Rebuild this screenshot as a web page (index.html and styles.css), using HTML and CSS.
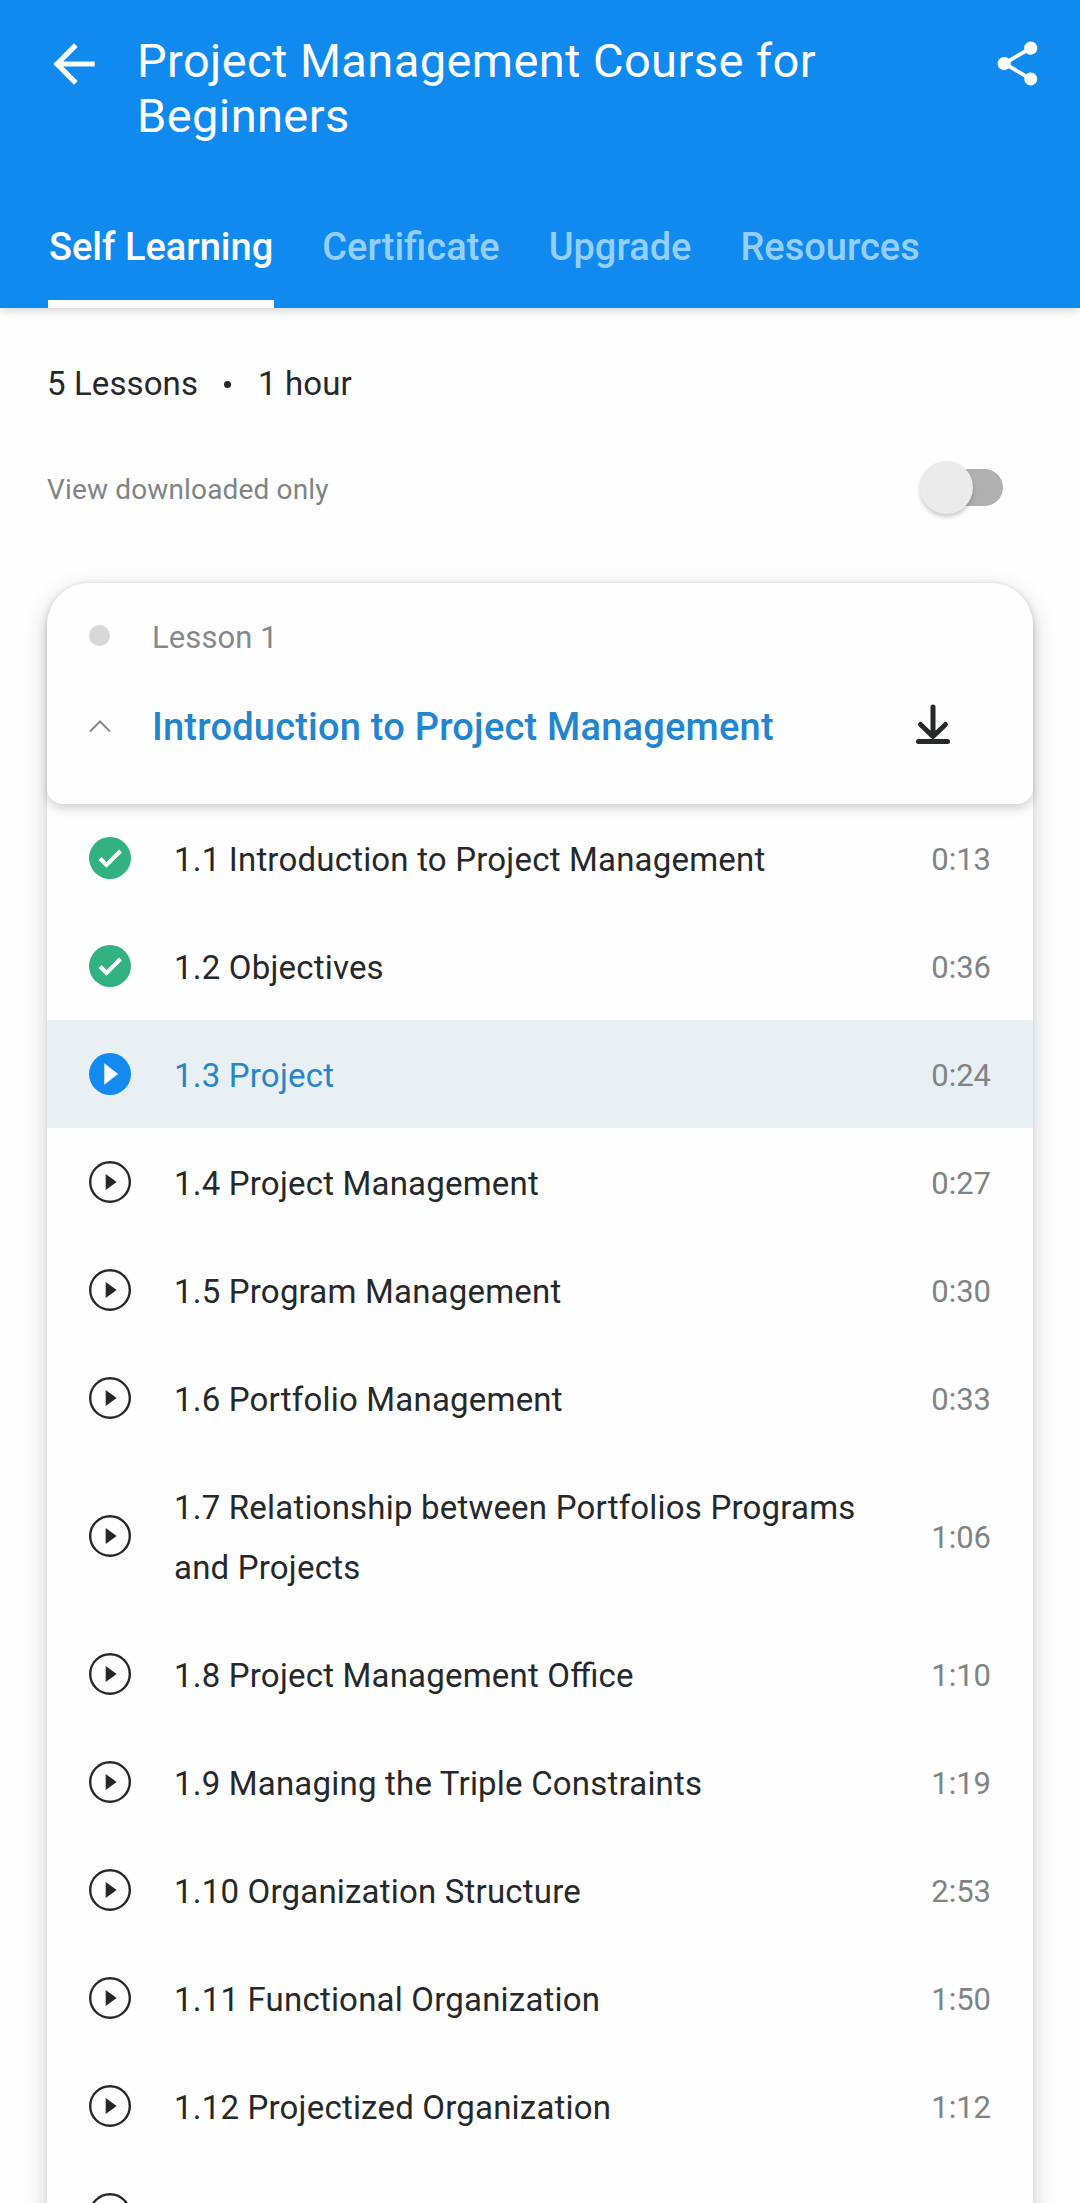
FILE: index.html
```
<!DOCTYPE html>
<html lang="en">
<head>
    <meta charset="UTF-8">
    <meta name="viewport" content="width=device-width, initial-scale=1.0">
    <title>Project Management Course for Beginners</title>
    <link rel="stylesheet" href="styles.css">
</head>
<body>
    <header class="header">
        <div class="title-bar">
            <svg class="back" viewBox="0 0 24 24"><path fill="#fff" d="M20 11H7.83l5.59-5.59L12 4l-8 8 8 8 1.41-1.41L7.83 13H20v-2z"/></svg>
            <h1 class="title">Project Management Course for Beginners</h1>
            <svg class="share" viewBox="0 0 24 24"><path fill="#fff" d="M18 16.08c-.76 0-1.44.3-1.96.77L8.91 12.7c.05-.23.09-.46.09-.7s-.04-.47-.09-.7l7.05-4.11c.54.5 1.25.81 2.04.81 1.66 0 3-1.34 3-3s-1.34-3-3-3-3 1.34-3 3c0 .24.04.47.09.7L8.04 9.81C7.5 9.31 6.79 9 6 9c-1.66 0-3 1.34-3 3s1.34 3 3 3c.79 0 1.5-.31 2.04-.81l7.12 4.16c-.05.21-.08.43-.08.65 0 1.61 1.31 2.92 2.92 2.92s2.92-1.31 2.92-2.92-1.31-2.92-2.92-2.92z"/></svg>
        </div>
        <nav class="tabs">
            <a class="tab selected">Self Learning</a>
            <a class="tab">Certificate</a>
            <a class="tab">Upgrade</a>
            <a class="tab">Resources</a>
        </nav>
    </header>

    <div class="summary">
        <span>5 Lessons</span>
        <span class="bullet"></span>
        <span>1 hour</span>
    </div>

    <div class="download-only">
        <span>View downloaded only</span>
        <div class="switch"><div class="thumb"></div></div>
    </div>

    <section class="card">
        <div class="card-head">
            <div class="lesson-no">
                <span class="dot"></span>
                <span>Lesson 1</span>
            </div>
            <div class="lesson-name">
                <svg class="chevron" viewBox="0 0 22 14"><path fill="none" stroke="#85898b" stroke-width="2" d="M1 12.5 11 2.5l10 10"/></svg>
                <h2>Introduction to Project Management</h2>
                <svg class="download" viewBox="0 0 36 42"><path fill="none" stroke="#25292c" stroke-width="5" stroke-linecap="round" stroke-linejoin="round" d="M18 4v29M5.500 21.500L18 33.500l12.500-12M3.500 38.500h29"/></svg>
            </div>
        </div>

        <ul class="topics" id="topics"></ul>
    </section>

    <script>
        const topics = [
            ['1.1 Introduction to Project Management', '0:13', 'done'],
            ['1.2 Objectives', '0:36', 'done'],
            ['1.3 Project', '0:24', 'active'],
            ['1.4 Project Management', '0:27', 'open'],
            ['1.5 Program Management', '0:30', 'open'],
            ['1.6 Portfolio Management', '0:33', 'open'],
            ['1.7 Relationship between Portfolios Programs and Projects', '1:06', 'open'],
            ['1.8 Project Management Office', '1:10', 'open'],
            ['1.9 Managing the Triple Constraints', '1:19', 'open'],
            ['1.10 Organization Structure', '2:53', 'open'],
            ['1.11 Functional Organization', '1:50', 'open'],
            ['1.12 Projectized Organization', '1:12', 'open'],
            ['1.13 Matrix Organization', '', 'open']
        ];

        const icons = {
            done: '<circle cx="21" cy="21" r="21" fill="#32b181"/><path fill="none" stroke="#fff" stroke-width="4" d="M11 21.500l6.500 6.500L31.500 14"/>',
            active: '<circle cx="21" cy="21" r="21" fill="#138aef"/><path fill="#fff" d="M15.300 10.300v21.400L29 21z"/>',
            open: '<circle cx="21" cy="21" r="19.800" fill="none" stroke="#25292c" stroke-width="2.400"/><path fill="#25292c" d="M16.700 13v16l11-8z"/>'
        };

        let rows = '';
        topics.forEach(([name, time, state]) => {
            rows += `<li class="topic ${state}">
                <svg class="state" viewBox="0 0 42 42">${icons[state]}</svg>
                <span class="name">${name}</span>
                <span class="time">${time}</span>
            </li>`;
        });
        document.querySelector('#topics').innerHTML = rows;
    </script>
</body>
</html>
```

FILE: styles.css
```
* {
    box-sizing: border-box;
}
body {
    margin: 0;
    height: 2203px;
    overflow: hidden;
    background-color: #fefefe;
    color: #25292c;
    font-family: Roboto, sans-serif;
}
h1, h2, ul {
    margin: 0;
    padding: 0;
}
svg {
    display: block;
    flex-shrink: 0;
}

/* header */
.header {
    display: flex;
    flex-direction: column;
    justify-content: space-between;
    height: 308px;
    padding: 33px 36px 0 43px;
    background-color: #118aef;
    color: #fff;
    box-shadow: 0 2px 10px rgba(0, 0, 0, 0.18);
}
.title-bar {
    display: flex;
    align-items: flex-start;
}
.back {
    width: 62px;
    height: 62px;
}
.title {
    flex: 1;
    padding: 0 120px 0 32px;
    font-size: 47px;
    font-weight: 400;
    line-height: 55px;
    letter-spacing: 0.4px;
}
.share {
    width: 53px;
    height: 53px;
    margin-top: 4px;
}
.tabs {
    display: flex;
    gap: 47px;
    padding-left: 5px;
}
.tab {
    height: 83px;
    padding: 0 1px;
    border-bottom: 8px solid transparent;
    font-size: 38px;
    font-weight: 500;
    line-height: 44px;
    color: #93d0ff;
}
.tab.selected {
    color: #fff;
    border-color: #fff;
}

/* course info */
.summary {
    display: flex;
    align-items: center;
    margin: 54px 47px 0;
    font-size: 33px;
    line-height: 44px;
    letter-spacing: 0.1px;
}
.bullet {
    width: 7px;
    height: 7px;
    margin: 0 27px 0 26px;
    border-radius: 50%;
    background-color: #25292c;
}
.download-only {
    display: flex;
    align-items: center;
    justify-content: space-between;
    height: 60px;
    margin: 53px 77px 0 47px;
    font-size: 28px;
    letter-spacing: 0.15px;
    color: #808486;
}
.switch {
    display: flex;
    align-items: center;
    width: 75px;
    height: 37px;
    margin-bottom: 3px;
    border-radius: 19px;
    background-color: #b0b0b0;
}
.thumb {
    flex-shrink: 0;
    width: 53px;
    height: 53px;
    margin-left: -8px;
    border-radius: 50%;
    background-color: #ebebeb;
    box-shadow: 0 3px 4px rgba(0, 0, 0, 0.2);
}

/* lesson card */
.card {
    margin: 64px 47px 0;
    border-radius: 42px 42px 0 0;
    background-color: #fefefe;
    box-shadow: 0 0 4px rgba(0, 0, 0, 0.08), 0 8px 24px rgba(0, 0, 0, 0.18);
}
.card-head {
    height: 221px;
    padding: 32px 82px 0 42px;
    border-radius: 42px 42px 16px 16px;
    background-color: #fefefe;
    box-shadow: 0 5px 10px rgba(0, 0, 0, 0.16);
}
.lesson-no {
    display: flex;
    align-items: center;
    height: 44px;
    gap: 42px;
    font-size: 31px;
    letter-spacing: 0.1px;
    color: #85898b;
}
.dot {
    width: 21px;
    height: 21px;
    margin-bottom: 3px;
    border-radius: 50%;
    background-color: #d8d8d8;
}
.lesson-name {
    display: flex;
    align-items: center;
    height: 50px;
    margin-top: 43px;
}
.lesson-name h2 {
    flex: 1;
    margin-left: 41px;
    font-size: 38px;
    font-weight: 500;
    letter-spacing: 0.22px;
    color: #2185cf;
}
.chevron {
    width: 22px;
    height: 14px;
    margin-bottom: 2px;
}
.download {
    width: 36px;
    height: 42px;
    margin-bottom: 6px;
}

/* topic rows */
.topics {
    list-style: none;
}
.topic {
    display: flex;
    align-items: center;
    min-height: 108px;
    padding: 0 42px;
}
.topic.active {
    background-color: #e8f0f4;
}
.state {
    width: 42px;
    height: 42px;
}
.name {
    flex: 1;
    padding: 26px 40px 22px 43px;
    font-size: 33px;
    line-height: 60px;
    letter-spacing: 0.2px;
    font-feature-settings: "liga" 1;
}
.active .name {
    color: #2785c9;
}
.time {
    padding-top: 2px;
    font-size: 31px;
    color: #808486;
}
```
